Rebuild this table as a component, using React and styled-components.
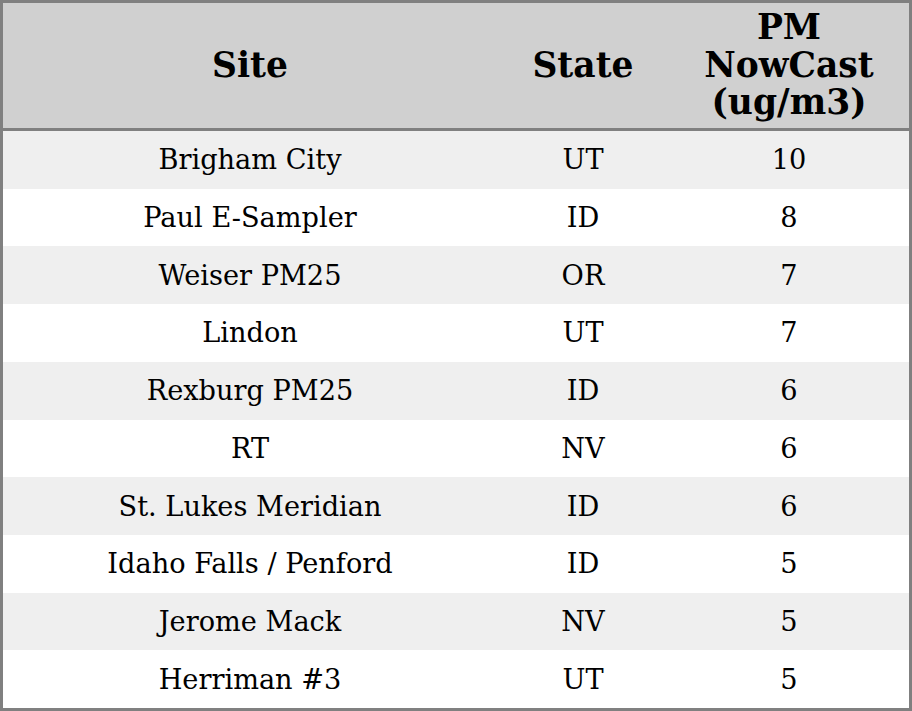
import React from "react";
import styled, { createGlobalStyle } from "styled-components";

const Global = createGlobalStyle`
  html, body { margin: 0; padding: 0; background: #ffffff; }
  #root { width: 912px; height: 711px; }
`;

const Table = styled.div`
  box-sizing: border-box;
  width: 912px;
  height: 711px;
  border: 3px solid #808080;
  display: grid;
  grid-template-columns: 494px 172px 240px;
  grid-template-rows: 128px repeat(10, 1fr);
  font-family: "DejaVu Serif", "Liberation Serif", serif;
  color: #000;
`;

const HeadCell = styled.div`
  background: #d0d0d0;
  border-bottom: 3px solid #808080;
  display: flex;
  align-items: center;
  justify-content: center;
  text-align: center;
  font-weight: bold;
  font-size: 34.5px;
  line-height: 37.5px;
`;

const Cell = styled.div`
  background: ${(p) => (p.$striped ? "#efefef" : "#ffffff")};
  display: flex;
  align-items: center;
  justify-content: center;
  font-size: 27.2px;
  white-space: nowrap;
`;

const rows = [
  ["Brigham City", "UT", "10"],
  ["Paul E-Sampler", "ID", "8"],
  ["Weiser PM25", "OR", "7"],
  ["Lindon", "UT", "7"],
  ["Rexburg PM25", "ID", "6"],
  ["RT", "NV", "6"],
  ["St. Lukes Meridian", "ID", "6"],
  ["Idaho Falls / Penford", "ID", "5"],
  ["Jerome Mack", "NV", "5"],
  ["Herriman #3", "UT", "5"],
];

export default function App() {
  return (
    <>
      <Global />
      <Table>
        <HeadCell>Site</HeadCell>
        <HeadCell>State</HeadCell>
        <HeadCell>
          PM
          <br />
          NowCast
          <br />
          (ug/m3)
        </HeadCell>
        {rows.map((r, i) =>
          r.map((v, j) => (
            <Cell key={`${i}-${j}`} $striped={i % 2 === 0}>
              {v}
            </Cell>
          ))
        )}
      </Table>
    </>
  );
}
